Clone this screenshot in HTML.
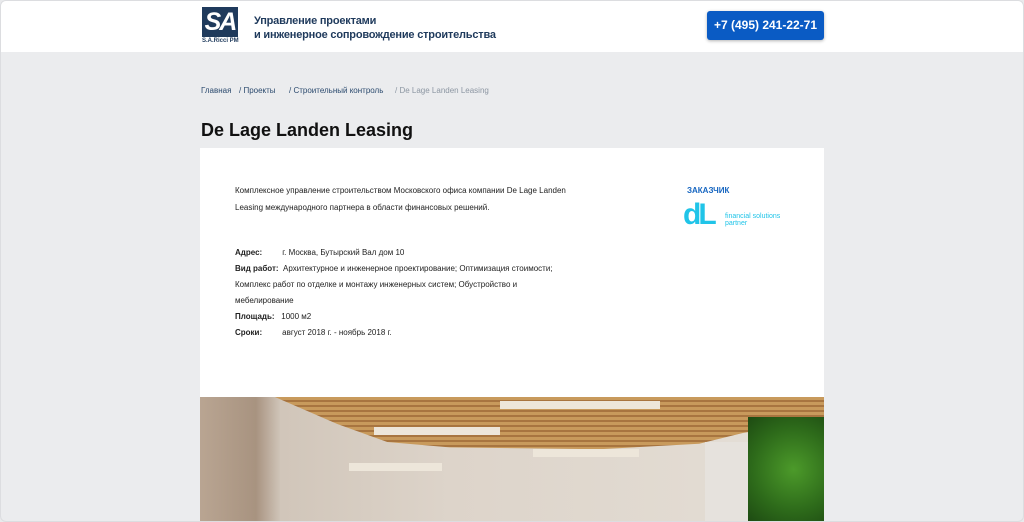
<!DOCTYPE html>
<html><head><meta charset="utf-8"><style>
*{margin:0;padding:0;box-sizing:border-box}
body{width:1024px;height:522px;overflow:hidden;background:#e9eaec;font-family:"Liberation Sans",Arial,sans-serif;position:relative}
.frame{position:absolute;inset:0;border:1px solid #dcdde0;border-radius:6px;background:#ebecee;overflow:hidden}
.in{position:absolute;left:-1px;top:-1px;width:1024px;height:522px}
.hdr{position:absolute;left:0;top:0;width:1024px;height:52px;background:#fff}
.logo{position:absolute;left:202px;top:7px;width:36px;height:30px;background:#1f3a5c;color:#fff;font-weight:bold;font-size:25px;line-height:30px;text-align:center;letter-spacing:-2px;font-style:italic}
.logot{position:absolute;left:202px;top:38px;font-size:6px;font-weight:bold;color:#1f3a5c}
.tag{position:absolute;left:254px;top:14px;font-size:11px;font-weight:bold;color:#1f3a5c;line-height:14px;letter-spacing:-0.2px}
.btn{position:absolute;left:707px;top:11px;width:117px;height:29px;background:#0a5bc4;border-radius:3px;color:#fff;font-weight:bold;font-size:12px;text-align:center;line-height:29px;box-shadow:0 1px 3px rgba(0,0,0,.3)}
.bc{position:absolute;top:86px;font-size:8px;color:#2b4a6e}
h1{position:absolute;left:201px;top:120px;font-size:18px;font-weight:bold;color:#111}
.card{position:absolute;left:200px;top:148px;width:624px;height:249px;background:#fff}
.t{position:absolute;font-size:8px;color:#222}
.photo{position:absolute;left:200px;top:397px;width:624px;height:125px;background:#d9cdbf;overflow:hidden}
</style></head><body><div class="frame"><div class="in">
<div class="hdr">
<div class="logo">SA</div><div class="logot">S.A.Ricci PM</div>
<div class="tag">Управление проектами<br>и инженерное сопровождение строительства</div>
<div class="btn">+7 (495) 241-22-71</div>
</div>
<div class="bc" style="left:201px">Главная</div>
<div class="bc" style="left:239px">/ Проекты</div>
<div class="bc" style="left:289px">/ Строительный контроль</div>
<div class="bc" style="left:395px;color:#8c96a2">/ De Lage Landen Leasing</div>
<h1>De Lage Landen Leasing</h1>
<div class="card">
<div class="t" style="left:35px;top:34px;width:360px;line-height:17px">Комплексное управление строительством Московского офиса компании De Lage Landen Leasing международного партнера в области финансовых решений.</div>
<div class="t" style="left:35px;top:97px;width:330px;line-height:16px"><b>Адрес:</b>&nbsp;&nbsp;&nbsp;&nbsp;&nbsp;&nbsp;&nbsp;&nbsp; г. Москва, Бутырский Вал дом 10<br><b>Вид работ:</b>&nbsp; Архитектурное и инженерное проектирование; Оптимизация стоимости; Комплекс работ по отделке и монтажу инженерных систем; Обустройство и мебелирование<br><b>Площадь:</b>&nbsp;&nbsp; 1000 м2<br><b>Сроки:</b>&nbsp;&nbsp;&nbsp;&nbsp;&nbsp;&nbsp;&nbsp;&nbsp; август 2018 г. - ноябрь 2018 г.</div>
<div style="position:absolute;left:487px;top:38px;font-size:8px;font-weight:bold;color:#1565c0">ЗАКАЗЧИК</div>
<div style="position:absolute;left:483px;top:52px;font-size:30px;font-weight:bold;color:#20c4e8;letter-spacing:-3px;line-height:30px">dL</div>
<div style="position:absolute;left:525px;top:65px;font-size:7px;color:#20c4e8;line-height:7px">financial solutions<br>partner</div>
</div>
<div class="photo">
<div style="position:absolute;left:0;top:0;width:624px;height:125px;background:linear-gradient(90deg,#cbbfb2,#ddd4ca 40%,#e2dbd2 80%,#e6e2dd)"></div>
<div style="position:absolute;left:0;top:0;width:80px;height:125px;background:linear-gradient(90deg,#b9a592,#a89380 70%,#cfc4b8)"></div>
<div style="position:absolute;left:0;top:0;width:624px;height:90px;background:repeating-linear-gradient(180deg,#c89a5c 0 3px,#a87540 3px 5px);clip-path:polygon(12% 0,100% 0,100% 25%,87% 40%,80% 52%,64% 58%,40% 56%,30% 50%,22% 30%,12% 0)"></div>
<div style="position:absolute;left:174px;top:30px;width:126px;height:8px;background:#ede6da"></div>
<div style="position:absolute;left:333px;top:52px;width:106px;height:8px;background:#ede6da"></div>
<div style="position:absolute;left:149px;top:66px;width:93px;height:8px;background:#ede6da"></div>
<div style="position:absolute;left:300px;top:4px;width:160px;height:8px;background:#ede6da"></div>
<div style="position:absolute;left:505px;top:45px;width:45px;height:80px;background:#e6e2dd"></div>
<div style="position:absolute;left:548px;top:20px;width:76px;height:105px;background:radial-gradient(circle at 60% 50%,#4c9a2a,#2d6a1a 60%,#1d4a12)"></div>
</div>
</div></div></body></html>
